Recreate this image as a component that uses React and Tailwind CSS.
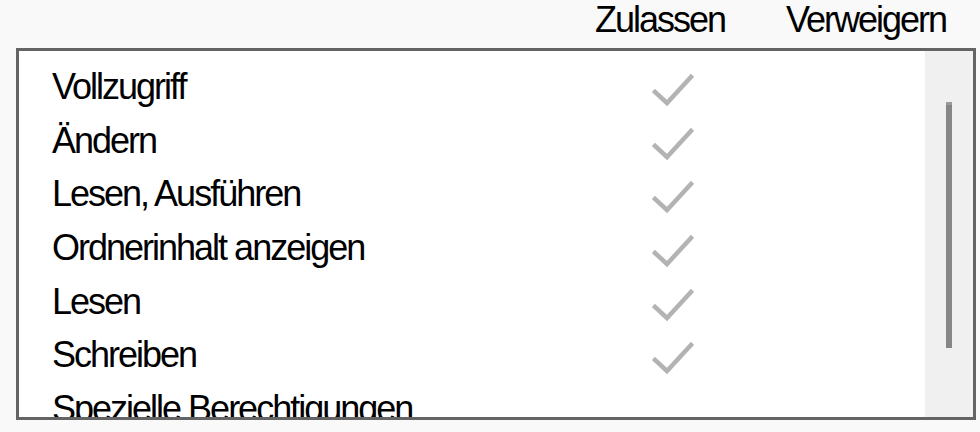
const permissions = [
  { label: "Vollzugriff", allow: true },
  { label: "Ändern", allow: true },
  { label: "Lesen, Ausführen", allow: true },
  { label: "Ordnerinhalt anzeigen", allow: true },
  { label: "Lesen", allow: true },
  { label: "Schreiben", allow: true },
  { label: "Spezielle Berechtigungen", allow: false },
];

function Check() {
  return (
    <svg width="42" height="34" viewBox="0 0 42 34" fill="none">
      <polyline
        points="3,19 15,30 39,4"
        stroke="#b3b3b3"
        strokeWidth="4.5"
        strokeLinecap="square"
        strokeLinejoin="miter"
      />
    </svg>
  );
}

export default function App() {
  return (
    <div
      className="w-[980px] h-[432px] bg-[#f9f9f9] text-black overflow-hidden text-[36px] tracking-[-2px]"
      style={{ fontFamily: '"Liberation Sans", Arial, sans-serif' }}
    >
      {/* column headers */}
      <div className="h-[48px] flex pl-[595px] leading-[40px]">
        <div className="w-[191px]">Zulassen</div>
        <div>Verweigern</div>
      </div>

      {/* permission list */}
      <div className="ml-[16px] w-[960px] h-[372px] border-[3px] border-[#646464] bg-white flex">
        <div className="flex-1 overflow-hidden pt-[9px]">
          {permissions.map((p) => (
            <div key={p.label} className="h-[53.67px] flex items-start leading-[53.67px] pl-[33px]">
              <div className="w-[600px] whitespace-nowrap">{p.label}</div>
              {p.allow && (
                <div className="pt-[13px]">
                  <Check />
                </div>
              )}
            </div>
          ))}
        </div>
        <div className="w-[48px] bg-[#f0f0f0] pt-[51px] pl-[21px]">
          <div className="w-[6px] h-[246px] bg-[#868686] border-t-[3px] border-[#9a9a9a]" />
        </div>
      </div>
    </div>
  );
}
